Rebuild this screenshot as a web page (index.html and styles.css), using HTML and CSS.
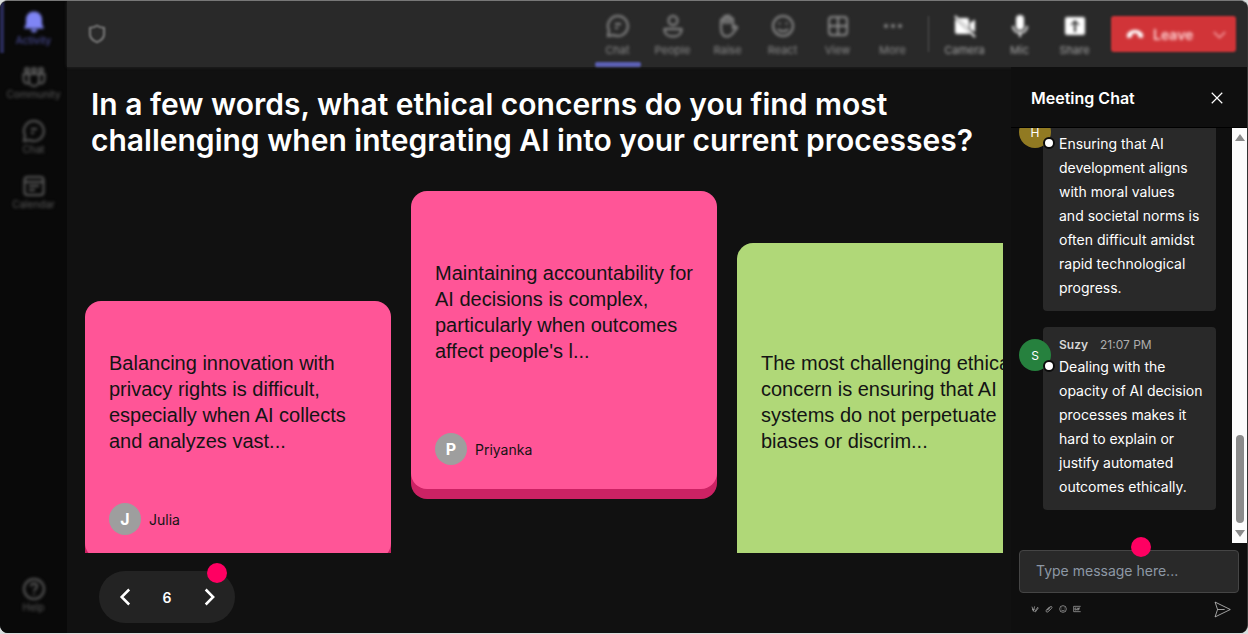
FILE: index.html
```html
<!DOCTYPE html>
<html lang="en">
<head>
<meta charset="utf-8">
<title>Meeting</title>
<link rel="stylesheet" href="styles.css">
</head>
<body>
<div class="app">
  <nav class="sidebar">
    <button class="nav-item active"><svg viewBox="0 0 24 24" class="solid"><path d="M12 1.500c-4.500 0-8 3.500-8 8V14l-2 4.500h20L20 14V9.500c0-4.500-3.500-8-8-8zM8.500 19.500c.5 2 1.800 3 3.500 3s3-1 3.500-3z"/></svg><span>Activity</span></button>
    <button class="nav-item"><svg viewBox="0 0 24 24"><circle cx="12" cy="6" r="2"/><circle cx="5" cy="6" r="2"/><circle cx="19" cy="6" r="2"/><path d="M7 10h10v7a5 5 0 0 1-10 0zM7 10H1.500v5c0 3 2 4.500 5 4.500M17 10h5.500v5c0 3-2 4.500-5 4.500"/></svg><span>Community</span></button>
    <button class="nav-item"><svg viewBox="0 0 24 24"><path d="M12 2a10 10 0 1 1-4.500 19L2 22l1-5.500A10 10 0 0 1 12 2zM9 10h6M9 14h3"/></svg><span>Chat</span></button>
    <button class="nav-item"><svg viewBox="0 0 24 24"><rect x="2.500" y="3" width="19" height="18" rx="3"/><path d="M2.500 8h19M7 12h10M7 16h6"/></svg><span>Calendar</span></button>
    <button class="nav-item help"><svg viewBox="0 0 24 24"><circle cx="12" cy="12" r="10"/><path d="M9 9.500c0-4 6-4 6 0 0 2.500-3 2.500-3 5M12 16.500v1.500"/></svg><span>Help</span></button>
  </nav>

  <header class="toolbar">
    <svg class="shield" viewBox="0 0 24 24"><path d="M12 2c3 2 5.500 2.500 8.500 2.500V12c0 5-3.500 8-8.500 10-5-2-8.500-5-8.500-10V4.500C6.500 4.500 9 4 12 2z"/></svg>
    <div class="tools">
      <button class="tool selected"><svg viewBox="0 0 24 24"><path d="M12 2a10 10 0 1 1-4.500 19L2 22l1-5.500A10 10 0 0 1 12 2zM9 10h6M9 14h3"/></svg><span>Chat</span></button>
      <button class="tool"><svg viewBox="0 0 24 24"><circle cx="12" cy="6.500" r="4.500"/><path d="M3.500 15h17v1c0 4-3.500 6.500-8.500 6.500S3.500 20 3.500 16z"/></svg><span>People</span></button>
      <button class="tool"><svg viewBox="0 0 24 24"><path d="M5 14V6.500a1.500 1.500 0 0 1 3 0V3.500a1.500 1.500 0 0 1 3 0V3a1.500 1.500 0 0 1 3 0v2.500a1.500 1.500 0 0 1 3 0V14l2-1.500c1.500-.5 2.500.5 2 1.500l-5 6c-1.500 2-3 2.500-5 2.500-4 0-6-3-6-8.500z"/><path d="M8 4v6M11 3v7M14 4v6"/></svg><span>Raise</span></button>
      <button class="tool"><svg viewBox="0 0 24 24"><circle cx="12" cy="12" r="10"/><path d="M8.500 8.500v2M15.500 8.500v2M7 15c2.500 3 7.500 3 10 0"/></svg><span>React</span></button>
      <button class="tool"><svg viewBox="0 0 24 24"><rect x="3" y="3" width="18" height="18" rx="3"/><path d="M12 3v18M3 12h18"/></svg><span>View</span></button>
      <button class="tool"><svg viewBox="0 0 24 24" class="solid"><circle cx="5" cy="12" r="2"/><circle cx="12" cy="12" r="2"/><circle cx="19" cy="12" r="2"/></svg><span>More</span></button>
      <span class="divider"></span>
      <button class="tool bright"><svg viewBox="0 0 24 24" class="solid"><path d="M5.500 4H14a2 2 0 0 1 2 2v8.500zM3 5.500L17 19.500l-1 .5H4a2 2 0 0 1-2-2V5.500zM17 9l5-3.500v12.500l-5-3z"/><path d="M2 2l20 21" class="line"/></svg><span>Camera</span></button>
      <button class="tool bright"><svg viewBox="0 0 24 24" class="solid"><rect x="8" y="1" width="8" height="15" rx="4"/><path d="M5 12c0 9 14 9 14 0M12 19v4" class="line"/></svg><span>Mic</span></button>
      <button class="tool bright"><svg viewBox="0 0 24 24" class="solid"><path fill-rule="evenodd" d="M4 3h16a2 2 0 0 1 2 2v14a2 2 0 0 1-2 2H4a2 2 0 0 1-2-2V5a2 2 0 0 1 2-2zm8 3l-4.500 4.500 1 1L11 9v9h2V9l2.500 2.500 1-1z"/></svg><span>Share</span></button>
    </div>
    <button class="leave"><svg viewBox="0 0 24 24" class="solid"><path d="M2 13c4-8 16-8 20 0l-1 4-5-1-1-4c-2-1-4-1-6 0l-1 4-5 1z"/></svg><span>Leave</span><svg viewBox="0 0 24 24" class="caret"><path d="M3 8l9 9 9-9"/></svg></button>
  </header>

  <main class="stage">
    <h1>In a few words, what ethical concerns do you find most challenging when integrating AI into your current processes?</h1>
    <section class="board">
      <article class="card pink short"><p>Balancing innovation with privacy rights is difficult, especially when AI collects and analyzes vast...</p><footer><span class="initial">J</span>Julia</footer></article>
      <article class="card pink raised"><p>Maintaining accountability for AI decisions is complex, particularly when outcomes affect people's l...</p><footer><span class="initial">P</span>Priyanka</footer></article>
      <article class="card green tall"><p>The most challenging ethical concern is ensuring that AI systems do not perpetuate biases or discrim...</p><footer></footer></article>
    </section>
    <div class="pager">
      <button aria-label="Previous"><svg viewBox="0 0 24 24"><path d="M17 3l-9 9 9 9"/></svg></button>
      <span>6</span>
      <button aria-label="Next"><svg viewBox="0 0 24 24"><path d="M8 3l9 9-9 9"/></svg></button>
      <i class="hotspot"></i>
    </div>
  </main>

  <aside class="chat">
    <header class="chat-head"><h2>Meeting Chat</h2><button aria-label="Close chat"><svg viewBox="0 0 24 24"><path d="M3 3l18 18M21 3L3 21"/></svg></button></header>
    <div class="feed">
      <div class="messages">
        <article class="message"><span class="avatar gold">H<i></i></span><div class="bubble"><div class="meta"></div><p>Ensuring that AI development aligns with moral values<br>and societal norms is often difficult amidst rapid technological progress.</p></div></article>
        <article class="message"><span class="avatar teal">S<i></i></span><div class="bubble"><div class="meta"><b>Suzy</b><time>21:07 PM</time></div><p>Dealing with the opacity of AI decision processes makes it hard to explain or justify automated outcomes ethically.</p></div></article>
      </div>
      <div class="scrollbar"><svg viewBox="0 0 10 8"><path d="M5 1l5 7H0z"/></svg><span class="thumb"></span><svg viewBox="0 0 10 8"><path d="M5 7l5-7H0z"/></svg></div>
    </div>
    <form class="composer">
      <div class="field"><input type="text" placeholder="Type message here..." aria-label="Type message here"><i class="hotspot"></i></div>
      <div class="actions">
        <button type="button" aria-label="Format"><svg viewBox="0 0 24 24"><path d="M3 5l4 14 4-15M3 13h8M11 20L20 7l2 2-9 12z"/></svg></button>
        <button type="button" aria-label="Attach"><svg viewBox="0 0 24 24"><path d="M6 15l9-9c4-4 8 0 5 4L10 20c-5 4-9-1-6-5L14 5M8 17l8-8"/></svg></button>
        <button type="button" aria-label="Emoji"><svg viewBox="0 0 24 24"><circle cx="12" cy="12" r="10"/><path d="M8 8v2M16 8v2M7 15c3 3 7 3 10 0"/></svg></button>
        <button type="button" aria-label="GIF"><svg viewBox="0 0 24 24"><path d="M23 4H2v16h21M10 9H6v6h4v-3M13 8v8M16 16V9h5M16 12h4"/></svg></button>
        <button type="submit" class="send" aria-label="Send"><svg viewBox="0 0 24 24"><path d="M1.500 1.500L23 12l-21.500 10.500L5 12zM5 12h10"/></svg></button>
      </div>
    </form>
  </aside>
</div>
</body>
</html>
```
FILE: styles.css
```css
* { box-sizing: border-box; }
body { margin: 0; background: #d9dddd; font-family: Inter, "Liberation Sans", sans-serif; color: #fff; }
h1, h2, p { margin: 0; }
button { padding: 0; border: 0; background: none; color: inherit; font: inherit; }
svg { display: block; fill: none; stroke: currentColor; stroke-width: 2; }
.solid { fill: currentColor; stroke: none; }
.line { fill: none; stroke: currentColor; stroke-width: 2; }

.app {
  display: grid;
  grid-template: 66px minmax(0, 1fr) / 67px minmax(0, 1fr) 236px;
  height: calc(100vh - 1px);
  overflow: hidden;
  border-top: 1px solid #777;
  border-right: 1px solid #333;
  border-radius: 8px;
  background: #111;
}

.sidebar { grid-row: 1 / 3; display: flex; flex-direction: column; background: #090909; color: #5c5c5c; }
.nav-item { display: flex; flex-direction: column; align-items: center; justify-content: center; height: 55px; padding-top: 2px; font-size: 10px; line-height: 12px; border-left: 4px solid transparent; border-right: 4px solid transparent; filter: blur(1px); }
.nav-item svg { width: 24px; height: 24px; }
.nav-item > * { filter: blur(1px); }
.nav-item.active { height: 52px; border-left-color: #292b58; color: #5154a8; }
.nav-item.active svg { color: #7f85f5; }
.nav-item.help { margin-top: auto; margin-bottom: 12px; }

.toolbar { grid-column: 2 / 4; display: flex; align-items: center; padding: 0 11px 0 20px; background: #292929; box-shadow: 0 0 3px #292929; color: #8c8c8c; }
.shield { width: 20px; height: 20px; filter: blur(1px); }
.tools { display: flex; align-items: center; align-self: stretch; margin-left: auto; filter: blur(1px); }
.tool { display: flex; flex-direction: column; align-items: center; gap: 6px; width: 55px; height: 100%; padding-top: 13px; font-size: 11px; line-height: 12px; }
.tool > * { filter: blur(1px); }
.tool svg { width: 24px; height: 24px; }
.tool.selected::after { content: ""; width: 46px; height: 5px; border-radius: 2px; background: #5c60b5; }
.tool.bright svg { color: #fff; }
.tool.bright { color: #a5a5a5; }
.divider { width: 1px; height: 36px; margin: 0 8px; background: #555; }
.leave { display: flex; align-items: center; gap: 8px; width: 125px; height: 36px; margin-left: 9px; padding: 0 9px 0 14px; border-radius: 3px; background: #d13438; color: #ffd5d5; font-size: 14px; font-weight: 600; filter: blur(1px); }
.leave > * { filter: blur(1px); }
.leave svg { width: 20px; height: 20px; color: #fff; }
.leave .caret { width: 15px; height: 15px; margin-left: auto; color: #ffc0c2; }

.stage { display: flex; flex-direction: column; min-width: 0; padding: 19px 8px 10px 18px; }
h1 { padding-left: 6px; font-size: 30px; line-height: 36px; font-weight: 600; }
.board { flex: 1; display: flex; align-items: flex-start; gap: 20px; min-height: 0; margin-top: 33px; overflow: hidden; }
.card { flex: none; display: flex; flex-direction: column; width: 306px; padding: 0 24px 24px; border-radius: 16px; color: #141414; }
.card p { margin: auto 0; font: 20px/26px "Liberation Sans", Arial, sans-serif; }
.card footer { display: flex; align-items: center; gap: 8px; height: 32px; font-size: 14px; }
.pink { background: #ff5597; box-shadow: 0 10px #cc2264; }
.green { background: #b0d878; box-shadow: 0 10px #7fa646; }
.short { height: 258px; margin-top: 110px; }
.raised { height: 298px; }
.tall { height: 374px; margin-top: 52px; }
.initial { display: grid; place-items: center; width: 32px; height: 32px; border-radius: 50%; background: #9e9e9e; color: #fff; font-size: 16px; font-weight: 700; }

.pager { position: relative; display: flex; align-items: center; justify-content: space-between; width: 136px; height: 52px; margin: 18px 0 0 14px; padding: 0 16px; border-radius: 26px; background: #232323; font-size: 14px; font-weight: 600; }
.pager svg { width: 20px; height: 20px; stroke-width: 3; }
.hotspot { position: absolute; width: 20px; height: 20px; border-radius: 50%; background: #ff0062; }
.pager .hotspot { top: -8px; right: 8px; }

.chat { display: flex; flex-direction: column; min-height: 0; background: #0f0f0f; }
.chat-head { display: flex; align-items: center; justify-content: space-between; height: 61px; padding: 2px 23px 0 20px; border-bottom: 1px solid #000; }
h2 { font-size: 16px; line-height: 24px; font-weight: 600; }
.chat-head svg { width: 14px; height: 14px; }
.feed { flex: 1; display: flex; min-height: 0; }
.messages { flex: 1; display: flex; flex-direction: column; justify-content: flex-end; gap: 16px; min-width: 0; padding: 0 16px 33px 8px; overflow: hidden; }
.message { display: flex; }
.avatar { position: relative; flex: none; display: grid; place-items: center; width: 32px; height: 32px; margin: 12px -8px 0 0; border-radius: 50%; font-size: 12px; }
.avatar i { position: absolute; right: -4px; bottom: -1px; width: 12px; height: 12px; border: 2px solid #0b0b0b; border-radius: 50%; background: #fff; }
.gold { background: #917a22; }
.teal { background: #26813e; }
.bubble { flex: 1; min-width: 0; padding: 8px 12px 11px 16px; border-radius: 4px; background: #292929; }
.meta { display: flex; gap: 12px; height: 20px; font-size: 12px; line-height: 20px; color: #adadad; }
.meta b { font-weight: 600; color: #d6d6d6; }
.bubble p { font-size: 14px; line-height: 24px; }
.scrollbar { display: flex; flex-direction: column; align-items: center; width: 15px; padding: 5px 0; background: #fcfcfc; color: #8b8b8b; }
.scrollbar svg { width: 10px; height: 8px; fill: currentColor; stroke: none; }
.thumb { width: 8px; height: 88px; margin: auto 0 7px; border-radius: 4px; background: #8b8b8b; }

.composer { padding: 7px 8px 14px; }
.field { position: relative; }
.field input { display: block; width: 100%; height: 43px; padding: 0 16px 2px; border: 1px solid #454545; border-radius: 4px; background: #292929; color: #fff; font: 14px/20px Inter, sans-serif; }
.field input::placeholder { color: #8d98a5; }
.field .hotspot { top: -13px; left: calc(50% + 2px); }
.actions { display: flex; align-items: center; gap: 6px; height: 20px; margin-top: 6px; padding: 0 8px 0 12px; color: #b5b5b5; }
.actions svg { width: 8px; height: 8px; }
.actions .send { margin-left: auto; color: #ddd; }
.actions .send svg { width: 17px; height: 17px; stroke-width: 1; }
```
